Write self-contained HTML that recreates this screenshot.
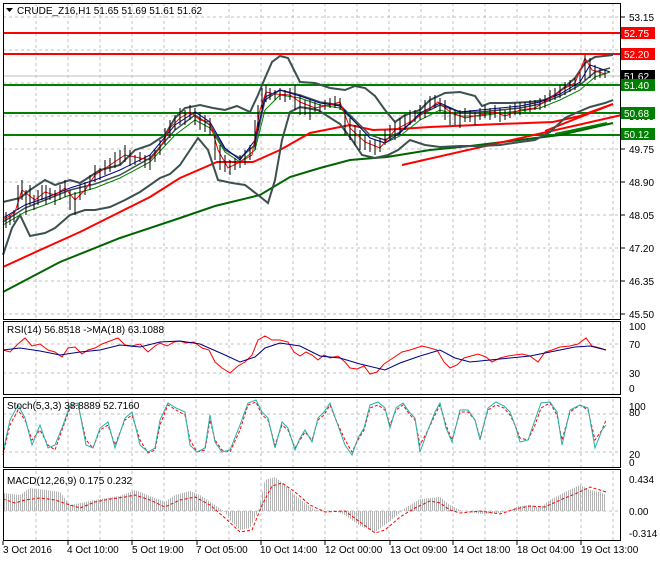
<!DOCTYPE html>
<html><head><meta charset="utf-8"><style>
body{margin:0;background:#fff;width:660px;height:560px;overflow:hidden;font-family:"Liberation Sans",sans-serif}
svg text{font-family:"Liberation Sans",sans-serif;font-size:10px;fill:#000}
</style></head><body>
<svg width="660" height="560" viewBox="0 0 660 560" xmlns="http://www.w3.org/2000/svg">
<defs>
<pattern id="hs" width="2" height="4" patternUnits="userSpaceOnUse"><rect x="0" y="0" width="1" height="4" fill="#b4b4b4"/></pattern>
</defs>
<rect width="660" height="560" fill="#fff"/>
<g stroke="#c0c0c0" stroke-dasharray="3,3" stroke-width="1">
<path d="M36 3V540M68 3V540M100 3V540M132 3V540M164 3V540M196 3V540M229 3V540M261 3V540M293 3V540M325 3V540M357 3V540M389 3V540M421 3V540M453 3V540M485 3V540M517 3V540M549 3V540M581 3V540M613 3V540"/>
<path d="M3 17H621M3 50H621M3 83H621M3 116H621M3 149H621M3 182H621M3 215H621M3 248H621M3 281H621M3 314H621"/>
<path d="M3 344H621M3 373H621M3 414H621M3 452H621M3 511H621"/>
</g>
<rect x="0" y="319" width="621" height="3" fill="#fff"/><rect x="0" y="395" width="621" height="3" fill="#fff"/><rect x="0" y="467" width="621" height="3" fill="#fff"/>
<line x1="3" y1="76" x2="621" y2="76" stroke="#c0c0c0"/>
<line x1="3" y1="33" x2="621" y2="33" stroke="#f00" stroke-width="2"/>
<line x1="3" y1="54" x2="621" y2="54" stroke="#f00" stroke-width="2"/>
<line x1="3" y1="85" x2="621" y2="85" stroke="#008000" stroke-width="2"/>
<line x1="3" y1="113" x2="621" y2="113" stroke="#008000" stroke-width="2"/>
<line x1="3" y1="135" x2="621" y2="135" stroke="#008000" stroke-width="2"/>
<polyline fill="none" stroke="#006400" stroke-width="2" points="3,292 60,262 120,238 180,218 215,206 260,195 290,177 320,168 350,160 387,157 430,150 470,146 511,141 560,135 613,123"/>
<polyline fill="none" stroke="#f00" stroke-width="2" points="3,267 40,250 80,232 120,212 150,197 180,178 217,162 253,162 280,150 310,133 350,125 373,130 400,129 430,127 500,124 553,122 580,116 613,104"/>
<line x1="402" y1="165" x2="626" y2="114" stroke="#f00" stroke-width="2"/>
<line x1="545" y1="131" x2="613" y2="104" stroke="#f00" stroke-width="2"/>
<line x1="555" y1="134" x2="607" y2="123" stroke="#008000" stroke-width="2"/>
<polyline fill="none" stroke="#3c5050" stroke-width="2" points="3,202 20,198 30,190 45,180 55,185 70,180 80,183 100,170 120,165 135,150 150,145 165,135 175,118 185,108 200,105 213,108 225,110 237,106 250,112 258,95 265,78 272,62 280,56 288,58 295,72 300,82 315,83 330,88 345,90 355,86 365,88 375,96 385,110 395,122 405,115 420,110 430,100 445,93 460,92 475,96 482,106 490,103 510,103 530,102 545,100 555,95 565,87 575,78 585,63 595,57 613,55"/>
<polyline fill="none" stroke="#3c5050" stroke-width="2" points="3,255 12,228 20,215 30,236 45,233 55,228 70,215 85,210 95,210 110,207 125,200 140,192 160,178 170,174 180,165 190,150 198,138 208,150 218,180 232,183 245,185 258,195 268,203 275,180 282,140 290,112 300,107 318,110 340,124 352,140 362,155 375,158 388,155 398,150 410,140 425,145 440,147 460,146 480,146 500,145 520,142 535,140 550,132 565,118 578,112 590,107 605,103 613,100"/>
<polyline fill="none" stroke="#3c5050" stroke-width="1.5" points="3,222 25,208 45,200 70,190 95,184 120,175 150,158 175,130 195,115 210,125 225,150 240,158 255,145 265,100 280,90 300,95 320,102 340,105 355,120 370,135 385,140 400,132 420,115 440,105 460,112 480,112 500,110 520,108 540,104 560,96 580,85 595,72 610,68"/>
<polyline fill="none" stroke="#008000" stroke-width="1" points="3,225 25,212 45,205 70,195 95,188 120,178 150,162 175,135 195,120 210,128 225,152 240,162 255,150 265,110 280,95 300,98 320,105 340,108 355,122 370,138 385,143 400,136 420,120 440,110 460,116 480,116 500,113 520,111 540,108 560,100 580,90 595,77 610,72"/>
<polyline fill="none" stroke="#00008b" stroke-width="1" points="3,218 25,205 45,198 70,188 95,180 120,170 150,155 175,125 195,112 210,122 225,148 240,160 255,140 265,97 280,90 300,96 320,103 340,106 355,122 370,138 385,143 400,133 420,113 440,103 460,112 480,110 500,108 520,106 540,102 560,94 580,82 590,65 610,72"/>
<polyline fill="none" stroke="#f00" stroke-width="1" points="3,220 15,212 22,190 35,200 45,192 55,195 65,188 75,200 85,190 95,175 110,165 125,155 140,158 150,160 160,148 170,128 180,118 190,112 200,120 210,122 218,150 228,168 240,162 252,155 260,110 266,92 275,94 290,95 300,102 315,108 330,105 340,102 350,128 365,142 380,148 395,130 410,122 425,112 438,102 450,112 465,118 480,115 495,112 505,116 520,110 535,108 550,98 565,88 575,83 585,58 592,70 605,74"/>
<path fill="none" stroke="#000" stroke-width="1" d="M6 212V228M10 215V225M14 210V222M18 185V210M22 180V200M26 190V215M30 185V205M34 195V210M38 190V205M42 185V200M46 185V205M50 188V200M55 190V205M60 185V200M65 180V197M70 190V210M75 192V215M80 185V200M85 182V195M90 175V190M95 165V182M100 168V180M105 160V175M110 158V172M115 152V168M120 150V165M125 145V162M130 150V166M135 155V165M140 152V162M145 155V168M150 155V170M155 150V162M160 140V155M165 128V145M170 120V138M175 115V130M180 108V125M185 110V125M190 105V120M195 108V125M200 112V130M205 115V132M210 118V135M215 135V160M220 145V170M225 155V172M230 160V175M235 158V170M240 155V168M245 150V165M250 145V160M255 120V150M258 105V130M262 88V110M266 85V102M270 88V100M275 90V100M280 88V100M285 90V102M290 88V100M295 85V110M300 95V115M305 100V115M310 100V120M315 102V112M320 104V112M325 100V110M330 98V108M335 96V108M340 98V110M345 110V135M350 118V140M355 125V145M360 130V150M365 135V150M370 140V152M375 140V155M380 138V152M385 130V145M390 125V140M395 122V140M400 118V135M405 115V130M410 110V125M415 110V122M420 105V120M425 100V118M430 96V110M435 95V108M440 98V112M445 100V120M450 108V125M455 110V125M460 110V128M465 108V122M470 110V122M475 112V125M480 108V120M485 105V118M490 108V120M495 105V118M500 108V122M505 110V120M510 105V118M515 103V115M520 102V115M525 102V112M530 100V112M535 100V110M540 98V110M545 95V108M550 90V102M555 88V100M560 85V98M565 82V95M570 80V92M575 78V90M580 72V85M585 55V80M590 58V78M595 65V80M600 68V78M605 70V78"/>
<polyline fill="none" stroke="#f00" stroke-width="1" points="3,350 10,352 18,344 25,338 32,346 40,344 48,350 55,352 62,357 68,348 75,347 82,354 88,350 95,348 102,344 110,341 118,338 125,345 132,346 140,344 148,352 155,346 160,343 167,346 174,342 180,341 186,343 194,342 202,348 209,350 215,362 222,368 230,373 238,366 245,362 252,355 258,340 265,336 272,340 280,340 288,342 294,352 300,356 306,352 312,355 318,360 324,355 330,358 338,356 345,362 350,368 357,369 364,366 370,374 377,372 384,364 390,360 396,356 402,352 410,350 416,348 422,346 430,348 437,350 444,362 450,368 457,365 464,358 471,356 478,354 486,357 492,362 500,358 508,356 515,355 522,354 530,356 538,362 545,352 552,350 560,347 570,346 578,344 586,338 592,346 600,348 606,350"/>
<polyline fill="none" stroke="#000080" stroke-width="1" points="3,350 20,348 40,351 60,355 80,352 100,350 120,345 140,347 160,342 180,341 200,344 225,355 240,362 255,357 265,348 280,343 300,346 320,356 340,358 360,364 385,370 400,363 420,356 440,350 455,358 470,362 490,360 510,358 530,356 545,353 560,350 575,347 590,346 606,350"/>
<polyline fill="none" stroke="#f00" stroke-width="1" stroke-dasharray="3,2" points="3,455 10,425 18,410 25,420 32,440 40,430 48,445 55,450 62,430 70,408 78,405 86,440 93,448 100,430 108,425 115,445 125,420 132,415 140,440 148,453 155,450 160,425 168,405 176,410 185,415 190,440 197,452 205,450 210,420 215,440 222,450 230,452 240,430 248,405 256,402 262,415 268,420 275,445 282,425 288,430 295,448 300,440 305,432 312,440 318,420 324,415 330,405 336,420 345,440 352,452 358,440 364,430 370,408 378,405 385,410 390,425 396,410 403,405 410,415 415,420 420,445 428,430 435,415 440,405 446,425 452,440 460,412 468,412 475,420 480,438 488,410 496,405 504,408 510,415 515,425 520,438 528,440 535,425 541,408 550,403 557,415 562,440 570,412 580,405 588,410 595,440 602,430 606,420"/>
<polyline fill="none" stroke="#20b2aa" stroke-width="1" points="3,452 10,420 18,405 25,418 32,445 40,425 48,448 55,445 62,428 70,405 78,403 86,445 93,448 100,428 108,422 115,448 125,418 132,412 140,445 148,452 155,448 160,420 168,403 176,408 185,412 190,445 197,452 205,448 210,415 215,442 222,452 230,450 240,425 248,403 256,400 262,412 268,418 275,448 282,422 288,428 295,450 300,438 305,430 312,442 318,418 324,412 330,403 336,420 345,445 352,455 358,438 364,428 370,405 378,402 385,408 390,428 396,408 403,403 410,413 415,418 420,452 428,430 435,412 440,403 446,428 452,442 460,410 468,410 475,420 480,440 488,408 496,402 504,406 510,412 515,425 520,442 528,440 535,420 541,403 550,402 557,412 562,445 570,410 580,405 588,408 595,448 602,430 606,425"/>
<polygon fill="url(#hs)" points="3,493 20,495 30,488 45,490 60,492 70,505 80,503 100,499 120,496 135,490 150,496 165,502 175,495 190,491 200,495 215,505 225,512 230,520 240,530 250,528 258,512 265,480 275,477 285,485 295,495 305,503 315,510 325,511 335,511 345,515 360,526 375,532 385,525 395,517 405,508 420,499 440,497 450,505 460,510 480,514 500,513 510,510 520,506 530,505 540,508 550,500 565,492 580,485 590,490 600,492 606,495 606,511 3,511"/>
<polyline fill="none" stroke="#f00" stroke-width="1" stroke-dasharray="3,2" points="3,499 15,503 25,500 40,498 55,500 70,505 80,508 95,502 110,499 125,497 135,495 150,500 165,507 180,500 195,497 210,505 225,518 240,532 252,530 262,505 272,486 282,483 295,492 310,505 325,512 345,511 360,522 375,533 385,530 400,517 415,508 430,501 440,503 450,510 460,513 480,511 500,514 515,509 530,506 545,507 560,500 575,494 590,487 600,490 606,492"/>
<g fill="none" stroke="#000" stroke-width="1">
<rect x="3.5" y="3.5" width="617" height="316"/>
<rect x="3.5" y="321.5" width="617" height="73"/>
<rect x="3.5" y="397.5" width="617" height="70"/>
<rect x="3.5" y="469.5" width="617" height="71"/>
<path d="M3 541v4M68 541v4M132 541v4M197 541v4M261 541v4M325 541v4M390 541v4M453 541v4M517 541v4M581 541v4"/>
<path d="M621 17h4M621 50h4M621 83h4M621 116h4M621 149h4M621 182h4M621 215h4M621 248h4M621 281h4M621 314h4"/>
</g>
<path d="M6 8h7l-3.5 4z" fill="#000"/>
<text x="17" y="14">CRUDE_Z16,H1  51.65 51.69 51.61 51.62</text>
<text x="7" y="333">RSI(14) 56.8518  -&gt;MA(18) 63.1088</text>
<text x="7" y="409">Stoch(5,3,3) 38.8889 52.7160</text>
<text x="7" y="484">MACD(12,26,9) 0.175 0.232</text>
<g>
<text x="629" y="21">53.15</text><text x="629" y="87">51.45</text><text x="629" y="120">50.60</text><text x="629" y="153">49.75</text><text x="629" y="186">48.90</text><text x="629" y="219">48.05</text><text x="629" y="252">47.20</text><text x="629" y="285">46.35</text><text x="629" y="318">45.50</text>
</g>
<rect x="621" y="27" width="34" height="12" fill="#f00"/><text x="624" y="37" style="fill:#fff">52.75</text>
<rect x="621" y="48" width="34" height="12" fill="#f00"/><text x="624" y="58" style="fill:#fff">52.20</text>
<rect x="621" y="70" width="34" height="12" fill="#000"/><text x="624" y="80" style="fill:#fff">51.62</text>
<rect x="621" y="79" width="34" height="12" fill="#008000"/><text x="624" y="89" style="fill:#fff">51.40</text>
<rect x="621" y="107" width="34" height="12" fill="#008000"/><text x="624" y="117" style="fill:#fff">50.68</text>
<rect x="621" y="128" width="34" height="12" fill="#008000"/><text x="624" y="138" style="fill:#fff">50.12</text>
<text x="629" y="330">100</text><text x="629" y="348">70</text><text x="629" y="377">30</text><text x="629" y="392">0</text>
<text x="629" y="410">100</text><text x="629" y="416">80</text><text x="629" y="458">20</text><text x="629" y="466">0</text>
<text x="629" y="483">0.434</text><text x="629" y="515">0.00</text><text x="629" y="537">-0.314</text>
<g font-size="10">
<text x="3" y="553">3 Oct 2016</text><text x="67" y="553">4 Oct 10:00</text><text x="132" y="553">5 Oct 19:00</text><text x="196" y="553">7 Oct 05:00</text><text x="260" y="553">10 Oct 14:00</text><text x="325" y="553">12 Oct 00:00</text><text x="390" y="553">13 Oct 09:00</text><text x="453" y="553">14 Oct 18:00</text><text x="517" y="553">18 Oct 04:00</text><text x="581" y="553">19 Oct 13:00</text>
</g>
</svg>
</body></html>
